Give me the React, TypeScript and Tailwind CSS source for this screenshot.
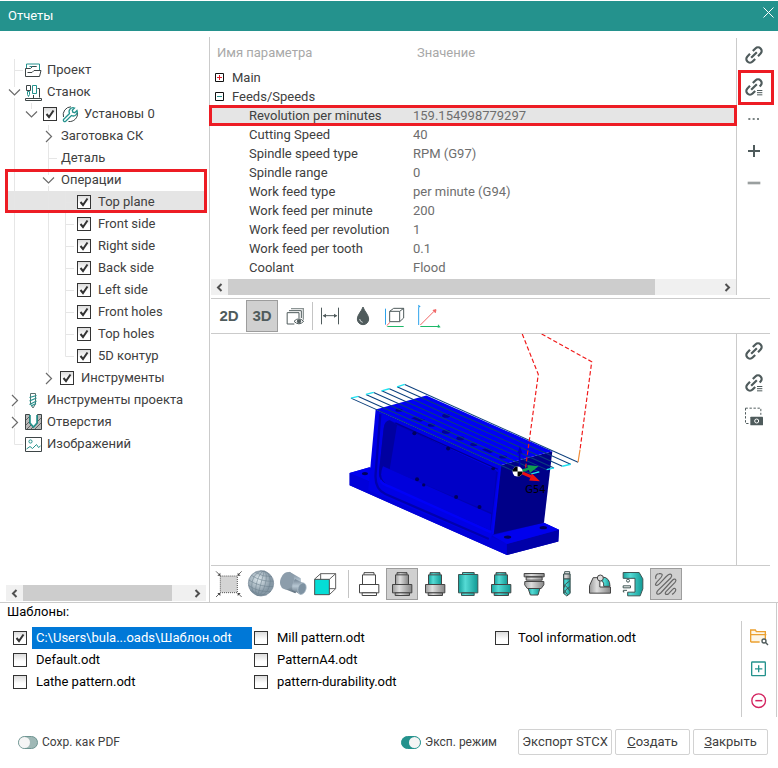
import type { ReactNode } from "react";
import clsx from "clsx";

const INK = "#4f5b5c";
const TEAL = "#24928d";

type IconProps = { children: ReactNode };

// All toolbar glyphs are drawn on a 96 unit grid and shown at 32px.
function Glyph({ children }: IconProps) {
  return (
    <svg className="size-8 shrink-0" viewBox="0 0 96 96" fill="none" stroke={INK} strokeWidth={3}>
      {children}
    </svg>
  );
}

function LinkIcon({ list = false }: { list?: boolean }) {
  return (
    <Glyph>
      <g transform="rotate(-45 48 48)" strokeWidth={6.500}>
        <path d={list ? "M54 37h11a11 11 0 0 1 0 22h-4" : "M54 37h11a11 11 0 0 1 0 22H54"} />
        <path d="M42 37H31a11 11 0 0 0 0 22h11M36 48h24" />
      </g>
      {list && (
        <>
          <path d="M55 54h21v21H55z" fill="white" stroke="none" />
          <path d="M57 58.500h16M57 65h16M57 71.500h16" />
        </>
      )}
    </Glyph>
  );
}

function ToolButton({ label, active, children }: { label: string; active?: boolean; children: ReactNode }) {
  return (
    <button
      type="button"
      aria-label={label}
      aria-pressed={active}
      className={clsx(
        "flex size-8 shrink-0 items-center justify-center border",
        active ? "border-[#9d9d9d] bg-[#d0d0d0]" : "border-transparent",
      )}
    >
      {children}
    </button>
  );
}

function CheckBox({ id, checked = false, label }: { id: string; checked?: boolean; label?: string }) {
  return (
    <span className="grid shrink-0 place-items-center">
      <input
        id={id}
        type="checkbox"
        defaultChecked={checked}
        aria-label={label}
        className="peer col-start-1 row-start-1 size-[14px] appearance-none border border-[#333] bg-linear-to-b from-[#dcdcdc] to-white to-60%"
      />
      <svg className="pointer-events-none invisible col-start-1 row-start-1 size-[14px] peer-checked:visible" viewBox="0 0 14 14" fill="none">
        <path d="M3.500 7l2.500 3 4.500-6.500" stroke="#333" strokeWidth={2} />
      </svg>
    </span>
  );
}

/* ---------- tree ---------- */

const treeIcons: Record<string, ReactNode> = {
  project: (
    <>
      <path d="M1.500 6V2h13v6M4.500 4.500h7" stroke={TEAL} />
      <path d="M.5 14.500v-8h5l2-2h4M.5 14.500h14l1.500-6h-7l-2 2H2.500" stroke="#3d4546" />
    </>
  ),
  machine: (
    <>
      <path d="M1.500 1.500h4v5h-4zM12.500 4.500h2v9M.5 14.500h16v2H.5zM8.500 11v3" stroke="#3d4546" />
      <path d="M7.500 1.500h4v8h-4zM2.500 7.500h2v3l-1 2-1-2z" stroke={TEAL} />
    </>
  ),
  setup: (
    <>
      <path d="M15.500 6.500a8 8 0 0 1-9 9M1.500 11A8 8 0 0 1 9 .8" stroke="#3d4546" />
      <path d="M1.500 13.500l6-6a4 4 0 0 1 5-5.500l-2.200 2.200.5 2 2 .5L15 4.500a4 4 0 0 1-5.500 5l-6 6a1.500 1.500 0 0 1-2-2z" stroke={TEAL} strokeWidth={1.300} />
    </>
  ),
  tools: (
    <>
      <path d="M5.500 4V1.500h5V4M5.500 12l2.500 4 2.500-4M5.500 4v8M10.500 4v8" stroke="#58706f" />
      <path d="M4.500 5.500l7-2M4.500 9l7-3M4.500 12.500l7-3.500M6 14l5-2.500" stroke={TEAL} strokeWidth={1.300} />
    </>
  ),
  holes: (
    <>
      <path d="M.5.500h4V9l4 4 4-4V.5h4v15H.5z" fill="#b9b9b9" stroke="#3d4546" />
      <path d="M1 6l4-4M1 11l4-4M2 15l4-4M6 15l3-3M10 15l6-6M12 8l4-4" stroke="#4a4a4a" strokeWidth={0.800} />
      <path d="M5 1v8l3.500 4L12 9V1" stroke={TEAL} strokeWidth={1.600} fill="white" />
    </>
  ),
  images: (
    <>
      <path d="M.5 1.500h16v14H.5z" stroke="#3d4546" />
      <circle cx="5.500" cy="5.500" r="1.600" stroke={TEAL} />
      <path d="M1.500 13l3.500-2.500 2.500 2 4-4 2 3 2-1.500" stroke={TEAL} />
    </>
  ),
};

type TreeNode = {
  label: string;
  icon?: string;
  check?: boolean;
  open?: boolean;
  selected?: boolean;
  branch?: boolean;
  children?: TreeNode[];
};

const tree: TreeNode[] = [
  { label: "Проект", icon: "project" },
  {
    label: "Станок",
    icon: "machine",
    branch: true,
    open: true,
    children: [
      {
        label: "Установы 0",
        icon: "setup",
        check: true,
        branch: true,
        open: true,
        children: [
          { label: "Заготовка СК", branch: true },
          { label: "Деталь" },
          {
            label: "Операции",
            branch: true,
            open: true,
            children: [
              { label: "Top plane", check: true, selected: true },
              { label: "Front side", check: true },
              { label: "Right side", check: true },
              { label: "Back side", check: true },
              { label: "Left side", check: true },
              { label: "Front holes", check: true },
              { label: "Top holes", check: true },
              { label: "5D контур", check: true },
            ],
          },
          { label: "Инструменты", check: true, branch: true },
        ],
      },
    ],
  },
  { label: "Инструменты проекта", icon: "tools", branch: true },
  { label: "Отверстия", icon: "holes", branch: true },
  { label: "Изображений", icon: "images" },
];

function TreeRow({ node, guides, last }: { node: TreeNode; guides: boolean[]; last: boolean }) {
  const id = `tree-${node.label}`;
  const text = <span className="whitespace-nowrap">{node.label}</span>;
  const plain = !node.check && !node.icon;
  return (
    <div className={clsx("mr-[5px] ml-[6px] flex h-[22px] items-center", node.selected && "bg-[#e5e5e5]")}>
      {guides.map((line, i) => (
        <svg key={i} className="h-[22px] w-[17px] shrink-0" stroke="#e6e6e6">
          {line && <path d="M8.500 0v22" />}
        </svg>
      ))}
      <svg className="h-[22px] w-[17px] shrink-0" fill="none" stroke="#e6e6e6">
        {node.branch ? (
          <>
            <path d={last ? "M8.500 0v6" : "M8.500 0v6M8.500 17v5"} />
            <path d={node.open ? "M3 8.500l5.500 5.500L14 8.500" : "M6 6l5.500 5.500L6 17"} stroke="#6b6b6b" strokeWidth={1.200} />
          </>
        ) : (
          <path d={last ? "M8.500 0v11.500H17" : "M8.500 0v22M8.500 11.500H17"} />
        )}
      </svg>
      <div
        className={clsx(
          "flex items-center",
          node.icon ? "gap-[5px]" : "gap-[7px]",
          guides.length === 0 && "ml-[2px]",
          guides.length > 0 && (plain ? "ml-1" : "ml-[3px]"),
        )}
      >
        {node.check && <CheckBox id={id} checked />}
        {node.icon && (
          <svg className="size-[17px] shrink-0" viewBox="0 0 17 17" fill="none">
            {treeIcons[node.icon]}
          </svg>
        )}
        {node.check ? <label htmlFor={id}>{text}</label> : text}
      </div>
    </div>
  );
}

function TreeLevel({ nodes, guides = [] }: { nodes: TreeNode[]; guides?: boolean[] }) {
  return (
    <ul>
      {nodes.map((node, i) => {
        const last = i === nodes.length - 1;
        return (
          <li key={node.label} className="relative">
            <TreeRow node={node} guides={guides} last={last} />
            {node.children && <TreeLevel nodes={node.children} guides={[...guides, !last]} />}
            {node.label === "Операции" && (
              <span className="pointer-events-none absolute top-0 right-[2px] left-[5px] h-11 border-3 border-[#ed1c24]" />
            )}
          </li>
        );
      })}
    </ul>
  );
}

function ScrollBar({ thumb }: { thumb: string }) {
  return (
    <div className="flex h-4 bg-[#f0f0f0]">
      <button type="button" aria-label="Влево" className="flex w-[17px] items-center justify-center">
        <svg className="size-[9px]" viewBox="0 0 9 9" fill="none" stroke="#505050" strokeWidth={2}>
          <path d="M6.500 1L3 4.500 6.500 8" />
        </svg>
      </button>
      <div className="flex-1">
        <div className={clsx("h-full bg-[#cdcdcd]", thumb)} />
      </div>
      <button type="button" aria-label="Вправо" className="flex w-[17px] items-center justify-center">
        <svg className="size-[9px]" viewBox="0 0 9 9" fill="none" stroke="#505050" strokeWidth={2}>
          <path d="M2.500 1L6 4.500 2.500 8" />
        </svg>
      </button>
    </div>
  );
}

/* ---------- parameters ---------- */

const groups = [
  { name: "Main", open: false, rows: [] },
  {
    name: "Feeds/Speeds",
    open: true,
    rows: [
      ["Revolution per minutes", "159.154998779297"],
      ["Cutting Speed", "40"],
      ["Spindle speed type", "RPM (G97)"],
      ["Spindle range", "0"],
      ["Work feed type", "per minute (G94)"],
      ["Work feed per minute", "200"],
      ["Work feed per revolution", "1"],
      ["Work feed per tooth", "0.1"],
      ["Coolant", "Flood"],
    ],
  },
];

function ParameterTable() {
  return (
    <table className="w-full table-fixed border-collapse text-left">
      <thead>
        <tr className="h-[30px] text-[#a8a8a8]">
          <th className="w-[203px] pl-[7px] font-normal">Имя параметра</th>
          <th className="pl-1 font-normal">Значение</th>
        </tr>
      </thead>
      {groups.map((group) => (
        <tbody key={group.name}>
          <tr className="h-[19px] leading-[19px]">
            <td colSpan={2} className="p-0">
              <div className="flex items-center gap-2 pl-[5px]">
                <button type="button" aria-label={group.name} aria-expanded={group.open} className="flex size-[9px] items-center">
                  <svg className="size-[9px]" viewBox="0 0 9 9" fill="none">
                    <path d="M.5.5h8v8h-8z" stroke="#111" />
                    <path d={group.open ? "M2 4.500h5" : "M2 4.500h5M4.500 2v5"} stroke={group.open ? TEAL : "#e0202a"} />
                  </svg>
                </button>
                {group.name}
              </div>
            </td>
          </tr>
          {group.rows.map(([name, value], i) => (
            <tr
              key={name}
              className={clsx("h-[19px] leading-[19px]", i === 0 && "bg-[#e5e5e5] outline-3 -outline-offset-2 outline-[#ed1c24]")}
            >
              <td className="p-0 pl-[39px]">{name}</td>
              <td className="p-0 text-[#6e6e6e]">{value}</td>
            </tr>
          ))}
        </tbody>
      ))}
    </table>
  );
}

/* ---------- 3D view ---------- */

const passes = [
  "M193 163L712 396",
  "M170 170L690 402",
  "M147 176L665 408",
  "M124 182L640 413",
  "M100 187L618 418",
  "M77 193L596 425",
  "M54 199L572 431",
  "M32 204L530 427",
];

function ModelView() {
  return (
    <svg className="block h-full w-full" viewBox="211 334 524 231" role="img" aria-label="Top plane">
      <g transform="translate(340 330) scale(.33333)" fill="none">
        {/* base plate */}
        <path d="M28 428L88 411 610 577 655 598 653 633 499 674 28 465Z" fill="#0000cf" />
        <path d="M28 428L28 465 499 674 499 640Z" fill="#0000da" />
        <path d="M499 640L655 598 653 633 499 674Z" fill="#0000a8" />
        <path d="M455 615L610 577 655 598 499 641Z" fill="#0000ee" />
        <path d="M28 428L88 411 92 455Z" fill="#0000f0" />
        {/* body */}
        <path d="M106 238L480 405 457 612 445 630 110 492 84 478Z" fill="#0000e6" />
        <path d="M480 405L635 363 610 577 457 612Z" fill="#000088" />
        <path d="M106 238L258 196 635 363 480 405Z" fill="#0000f6" />
        {/* pocket */}
        <path d="M120 252L106 430C103 465 115 482 135 491L445 626" stroke="#0000ae" strokeWidth={7} />
        <path d="M148 270Q132 272 130 295L116 425Q114 450 138 460L450 600 472 425 165 278Z" fill="#0000b4" />
        <path d="M148 270Q132 272 130 295L116 425Q114 450 138 460L152 425 170 285Z" fill="#0000a0" />
        <path d="M170 285L467 420 455 548 148 418Z" fill="#0000c6" />
        <path d="M128 408L452 552 449 600 150 468Q110 450 128 408Z" fill="#0000dc" />
        <path d="M120 450Q125 462 150 470L452 606" stroke="#0000f8" strokeWidth={7} />
        <path d="M165 278L472 417" stroke="#000090" strokeWidth={4} />
        <path d="M480 405L457 612" stroke="#0000f5" strokeWidth={5} />
        {/* drilled holes */}
        <g fill="#00005e">
          <ellipse cx="222" cy="309" rx="6" ry="6" />
          <ellipse cx="323" cy="355" rx="6" ry="6" />
          <ellipse cx="458" cy="415" rx="6" ry="5" />
          <ellipse cx="230" cy="447" rx="6" ry="6" />
          <ellipse cx="250" cy="464" rx="5" ry="5" />
          <ellipse cx="347" cy="500" rx="6" ry="6" />
          <ellipse cx="417" cy="530" rx="6" ry="6" />
          <ellipse cx="74" cy="430" rx="9" ry="5" />
          <ellipse cx="501" cy="620" rx="11" ry="5" />
          <ellipse cx="608" cy="592" rx="11" ry="5" />
        </g>
        <g fill="#000098">
          <ellipse cx="176" cy="240" rx="11" ry="5" />
          <ellipse cx="317" cy="257" rx="12" ry="6" />
          <ellipse cx="273" cy="285" rx="11" ry="5" />
          <ellipse cx="317" cy="305" rx="13" ry="6" />
          <ellipse cx="360" cy="324" rx="12" ry="6" />
          <ellipse cx="400" cy="343" rx="11" ry="5" />
          <ellipse cx="488" cy="380" rx="12" ry="5" />
          <path d="M212 264l14-5 28 10-13 6zM424 358l14-5 24 10-13 6z" />
        </g>
        {/* tool passes */}
        <g stroke="#0b3f7c" strokeWidth={3}>
          {passes.map((d) => (
            <path key={d} d={d} />
          ))}
        </g>
        <path
          d="M170 170l23-7M124 182l23-6M77 193l23-6M32 204l22-5M690 402l-25 6M640 413l-22 5M596 425l-24 6"
          stroke="#1fe4f2"
          strokeWidth={4}
        />
        {/* rapid moves */}
        <path d="M545 12L593 133 555 412M603 12L753 95 718 358" stroke="#f01818" strokeWidth={3.500} strokeDasharray="13 7" />
        <path d="M718 358l-6 38" stroke="#ef8a35" strokeWidth={3.500} />
        {/* origin */}
        <path d="M537 412V366" stroke="#0000b8" strokeWidth={5} />
        <path d="M530 370l8-22 8 22z" fill="#0000b8" />
        <path d="M543 422l25-8" stroke="#109c50" strokeWidth={8} />
        <path d="M560 404l34 4-26 20z" fill="#109c50" />
        <path d="M545 428l26 11" stroke="#f01010" strokeWidth={9} />
        <path d="M574 430l24 23-32-2z" fill="#f01010" />
        <circle cx="531" cy="424" r="15" fill="white" />
        <path d="M531 424v-15a15 15 0 0 0-15 15zM531 424v15a15 15 0 0 0 15-15z" fill="black" />
        <text x="554" y="487" fontSize="30" fill="black" fontFamily="DejaVu Sans, sans-serif">
          G54
        </text>
      </g>
    </svg>
  );
}

/* ---------- toolbars ---------- */

function ViewToolbar() {
  return (
    <div className="flex h-9 items-center gap-px border-y border-[#cbcbcb] pl-[2px]">
      <ToolButton label="2D">
        <span className="font-['Liberation_Sans',sans-serif] text-[15px] font-bold text-[#4f5b5c]">2D</span>
      </ToolButton>
      <ToolButton label="3D" active>
        <span className="font-['Liberation_Sans',sans-serif] text-[15px] font-bold text-[#4f5b5c]">3D</span>
      </ToolButton>
      <ToolButton label="Слои">
        <Glyph>
          <path d="M36 26h37v33" stroke="#8d9595" strokeWidth={4} />
          <path d="M30 32h37v22" />
          <path d="M46 72H24.500V38H60v16" />
          <path d="M45 64q14-15 29 0q-14 15-29 0z" fill="white" />
          <circle cx="60" cy="64" r="5" fill={INK} />
        </Glyph>
      </ToolButton>
      <span className="h-7 w-px bg-[#c4c4c4]" />
      <ToolButton label="Размер">
        <Glyph>
          <path d="M22.500 23v50M73.500 23v50M28 47h40" />
          <path d="M26 47l10-6v12zM70 47l-10-6v12z" fill={INK} stroke="none" />
        </Glyph>
      </ToolButton>
      <ToolButton label="Заливка">
        <Glyph>
          <path d="M48 21C44 34 31 44 31 57a17 17 0 0 0 34 0C65 44 52 34 48 21z" fill={INK} />
          <path d="M38 57a11 11 0 0 0 9 10" stroke="#d5dada" />
        </Glyph>
      </ToolButton>
      <ToolButton label="Габариты">
        <Glyph>
          <path d="M29 34h30v31H29zM29 34l12-9h30v29l-12 11M59 34l12-9" />
          <path d="M16.500 26v48" stroke="#2ea3ec" />
          <path d="M22 79.500h49" stroke="#1db868" />
          <path d="M20 77l10-10" stroke="#f16666" />
        </Glyph>
      </ToolButton>
      <ToolButton label="Оси">
        <Glyph>
          <path d="M17 22v53" stroke="#2ea3ec" />
          <path d="M15 14l8 5-6 5z" fill="#2ea3ec" stroke="none" />
          <path d="M22 79.500h54" stroke="#1db868" />
          <path d="M75 73l8 9-9 1z" fill="#1db868" stroke="none" />
          <path d="M22 75l41-41" stroke="#f16666" />
          <path d="M69 29l-2 9-7-7z" fill="#f16666" stroke="#f16666" />
        </Glyph>
      </ToolButton>
    </div>
  );
}

function HolderTones() {
  return (
    <svg className="absolute size-0" aria-hidden="true">
      <defs>
        <linearGradient id="steel">
          <stop offset="0" stopColor="#9a9a9a" />
          <stop offset=".35" stopColor="#dedede" />
          <stop offset="1" stopColor="#858585" />
        </linearGradient>
        <linearGradient id="teal">
          <stop offset="0" stopColor="#17a29c" />
          <stop offset=".35" stopColor="#55dbd5" />
          <stop offset="1" stopColor="#109994" />
        </linearGradient>
        <linearGradient id="cylinder" x1="0" x2="0" y1="0" y2="1">
          <stop offset="0" stopColor="#718292" />
          <stop offset=".45" stopColor="#b8c8d4" />
          <stop offset="1" stopColor="#5b6c7a" />
        </linearGradient>
        <radialGradient id="ball" cx=".4" cy=".35">
          <stop offset="0" stopColor="#dfe9ee" />
          <stop offset="1" stopColor="#8799a6" />
        </radialGradient>
      </defs>
    </svg>
  );
}

function Holder({ top, flange }: { top: string; flange: string }) {
  return (
    <Glyph>
      <g stroke="#454545">
        <path d="M33 20v-6h30v6" fill={top} />
        <path d="M28.500 49.500v-29h39v29z" fill={top} />
        <path d="M19.500 49.500h58v25h-58z" fill={flange} />
        <path d="M27.500 74.500h43v8h-43z" fill={flange} />
      </g>
    </Glyph>
  );
}

function DisplayToolbar() {
  return (
    <div className="flex h-[37px] items-center gap-px border-t border-[#cbcbcb] pl-[2px]">
      <HolderTones />
      <ToolButton label="Вписать">
        <Glyph>
          <path d="M22 24h51v50H22z" fill="#d4d4d4" stroke="#555" strokeDasharray="3 3" />
          <path d="M9 10l13 13M86 10L74 22M9 87l13-13M86 87L74 75" stroke="#666" />
          <path d="M22 14v9h-9zM74 14v9h9zM22 84v-9h-9zM74 84v-9h9z" fill="#444" stroke="none" />
        </Glyph>
      </ToolButton>
      <ToolButton label="Каркас">
        <Glyph>
          <circle cx="45" cy="46" r="38" fill="url(#ball)" stroke="#758796" strokeWidth={2} />
          <g stroke="#6c808e" strokeWidth={1.500} transform="rotate(15 45 46)">
            <ellipse cx="45" cy="46" rx="13" ry="38" />
            <ellipse cx="45" cy="46" rx="27" ry="38" />
            <path d="M45 8v76M7 46q38 12 76 0M10 30q35 12 70 0M19 18q26 9 52 0M10 62q35 12 70 0M19 75q26 8 52 0" />
          </g>
        </Glyph>
      </ToolButton>
      <ToolButton label="Тело">
        <Glyph>
          <g stroke="none">
            <path d="M31 11L65 31Q71 50 49 76L19 64Z" fill="url(#cylinder)" />
            <ellipse cx="24" cy="38" rx="20" ry="27" transform="rotate(20 24 38)" fill="#8c9dab" />
            <path d="M48 33l26 13-9 34-25-15q-2-18 8-32z" fill="url(#cylinder)" />
            <ellipse cx="69" cy="62" rx="12" ry="18" transform="rotate(18 69 62)" fill="#7e92a2" stroke="#b3c2cd" strokeWidth={2} />
          </g>
        </Glyph>
      </ToolButton>
      <ToolButton label="Заготовка">
        <Glyph>
          <g stroke="#4c4c4c">
            <path d="M26 17h45v45L52 80M26 17v45h45M7 34l19-17M52 34l19-17M8 79l18-17" stroke="#606060" />
            <path d="M8 34h44v46H8z" fill="#05ddd6" />
          </g>
        </Glyph>
      </ToolButton>
      <span className="mx-[3px] h-7 w-px bg-[#c4c4c4]" />
      <ToolButton label="Контур державки">
        <Holder top="white" flange="white" />
      </ToolButton>
      <ToolButton label="Державка" active>
        <Holder top="url(#steel)" flange="url(#steel)" />
      </ToolButton>
      <ToolButton label="Державка и инструмент">
        <Holder top="url(#teal)" flange="url(#steel)" />
      </ToolButton>
      <ToolButton label="Патрон">
        <Glyph>
          <g stroke="#3f5554" fill="url(#teal)">
            <path d="M31.500 13.500h35v6h-35zM19.500 19.500h58v55h-58zM28.500 74.500h38v8h-38z" />
          </g>
        </Glyph>
      </ToolButton>
      <ToolButton label="Инструмент">
        <Holder top="url(#teal)" flange="url(#teal)" />
      </ToolButton>
      <ToolButton label="Оправка">
        <Glyph>
          <g stroke="#454545" fill="url(#steel)">
            <path d="M30 60h36l-6 21H37z" fill="url(#teal)" />
            <path d="M18.500 16.500h60v10h-60zM24.500 26.500h48v10h-48zM20.500 40.500h57v10l-8 11H28l-8-11z" />
          </g>
        </Glyph>
      </ToolButton>
      <ToolButton label="Сверло">
        <Glyph>
          <g stroke="#3f5554">
            <path d="M41 11h15v7H41z" fill="#eee" />
            <path d="M37.500 18h20v15h-20z" fill="url(#steel)" />
            <path d="M37.500 33h20v43l-10 8-10-8z" fill="url(#teal)" />
            <path d="M57 38q-18 10-19 23M57 56q-15 8-17 20M39 50q12 8 18 20M38 66l12 14" />
          </g>
        </Glyph>
      </ToolButton>
      <ToolButton label="Приспособление">
        <Glyph>
          <g stroke="#454545">
            <path d="M16.500 75.500V53l11-24h20v28h32v18.500z" fill="url(#steel)" />
            <path d="M56 27q22 2 22 28H59V45l-8-8z" fill="url(#teal)" />
            <circle cx="49" cy="30" r="9" fill="#ddd" />
          </g>
        </Glyph>
      </ToolButton>
      <ToolButton label="Станок">
        <Glyph>
          <g stroke="#3f5554">
            <path d="M18.500 13.500h48l11 19v30l-8 21H32v-11h22V31H18.500z" fill="url(#teal)" />
            <path d="M18.500 53.500h22v6h-22zM22 72h-3v-5h11" fill="white" />
            <circle cx="33" cy="38" r="4.500" fill="white" />
          </g>
        </Glyph>
      </ToolButton>
      <ToolButton label="Траектория" active>
        <Glyph>
          <path
            d="M18 33C14 25 20 17 27 17C43 15 36 26 28 34C14 47 14 53 21 52C28 51 45 27 55 20C63 15 69 22 62 30L24 67C16 76 22 83 32 75L68 36C76 29 81 36 75 43L48 71C42 78 49 82 56 77L68 64C74 57 80 63 76 70C73 75 69 78 66 79"
            stroke="#666"
            strokeWidth={3.500}
          />
        </Glyph>
      </ToolButton>
    </div>
  );
}

/* ---------- templates ---------- */

const templates = [
  "C:\\Users\\bula...oads\\Шаблон.odt",
  "Default.odt",
  "Lathe pattern.odt",
  "Mill pattern.odt",
  "PatternA4.odt",
  "pattern-durability.odt",
  "Tool information.odt",
];

function Templates() {
  return (
    <section className="flex border-t border-[#cbcbcb] text-black">
      <div className="flex-1">
        <h2 className="pl-[7px] leading-[18px]">Шаблоны:</h2>
        <ul className="mt-[6px] grid auto-cols-[241px] grid-flow-col grid-rows-3 pl-[13px]">
          {templates.map((name, i) => (
            <li key={name} className="flex h-[22px] items-center gap-[5px]">
              <CheckBox id={`template-${i}`} checked={i === 0} />
              <label
                htmlFor={`template-${i}`}
                className={clsx("flex-1 pl-1 leading-[22px] whitespace-nowrap", i === 0 && "mr-[2px] bg-[#0078d7] text-white")}
              >
                {name}
              </label>
            </li>
          ))}
        </ul>
      </div>
      <div className="mr-px flex border-r border-[#cbcbcb] pt-[18px]">
        <div className="flex flex-col border-l border-[#cbcbcb] px-px">
          <ToolButton label="Открыть шаблон">
            <Glyph>
              <path d="M23 63V27h14l3 5h27v27M23 41h47M50 63H23" stroke="#eba02f" strokeWidth={4} fill="#fdf6e7" />
              <circle cx="63" cy="60" r="6" fill="white" strokeWidth={4} />
              <path d="M67 64l8 8" strokeWidth={4} />
            </Glyph>
          </ToolButton>
          <ToolButton label="Добавить шаблон">
            <Glyph>
              <rect x="26" y="27" width="41" height="41" rx="2" stroke={TEAL} strokeWidth={4} />
              <path d="M47 37v21M36 47.500h22" stroke={TEAL} strokeWidth={4} />
            </Glyph>
          </ToolButton>
          <ToolButton label="Удалить шаблон">
            <Glyph>
              <circle cx="47" cy="47" r="20.500" stroke="#d3235f" strokeWidth={4} />
              <path d="M37 47h21" stroke="#d3235f" strokeWidth={4.500} />
            </Glyph>
          </ToolButton>
        </div>
      </div>
    </section>
  );
}

function Switch({ id, label, on = false }: { id: string; label: string; on?: boolean }) {
  return (
    <div className="flex items-center gap-1 text-xs">
      <input
        id={id}
        type="checkbox"
        role="switch"
        defaultChecked={on}
        className="flex h-[13px] w-5 appearance-none items-center rounded-full border border-[#6f9592] bg-[#9fb8b6] before:size-[11px] before:rounded-full before:bg-[#f5f5f5] checked:justify-end checked:border-[#24928d] checked:bg-[#24928d]"
      />
      <label htmlFor={id}>{label}</label>
    </div>
  );
}

function FooterButton({ children, wide }: { children: ReactNode; wide?: boolean }) {
  return (
    <button
      type="button"
      className={clsx("h-[26px] rounded-[2px] border border-[#d2d2d2] bg-white whitespace-nowrap", wide ? "w-[94px]" : "w-[75px]")}
    >
      {children}
    </button>
  );
}

export default function App() {
  return (
    <div className="flex min-h-screen flex-col bg-white pt-px font-['Roboto','Noto_Sans',sans-serif] text-[13px] leading-4 text-[#404040]">
      <header className="flex h-[30px] items-center justify-between bg-[#24928d] pl-2 text-white">
        <h1>Отчеты</h1>
        <button type="button" aria-label="Закрыть окно" className="mr-1 mb-2">
          <svg className="size-[11px]" viewBox="0 0 11 11" stroke="white">
            <path d="M.5.5l10 10M10.500.5l-10 10" />
          </svg>
        </button>
      </header>

      <main className="flex flex-1">
        <nav className="mt-[6px] flex w-[210px] shrink-0 flex-col border-r border-[#cbcbcb] pt-[22px]">
          <TreeLevel nodes={tree} />
          <div className="mt-auto mr-[3px] mb-px ml-[6px]">
            <ScrollBar thumb="w-[90%]" />
          </div>
        </nav>

        <div className="flex min-w-0 flex-1 flex-col">
          <div className="flex pt-[7px]">
            <div className="flex min-w-0 flex-1 flex-col border-r border-[#cbcbcb]">
              <ParameterTable />
              <div className="mt-[2px] ml-px">
                <ScrollBar thumb="w-[87%]" />
              </div>
            </div>
            <div className="flex w-[41px] flex-col pt-px pl-px">
              <ToolButton label="Связать">
                <LinkIcon />
              </ToolButton>
              <div className="relative">
                <ToolButton label="Связать список">
                  <LinkIcon list />
                </ToolButton>
                <span className="pointer-events-none absolute -top-px left-0 h-[35px] w-9 border-3 border-[#ed1c24]" />
              </div>
              <ToolButton label="Ещё">
                <Glyph>
                  <path d="M31 48h6M44 48h6M57 48h6" stroke="#7b8484" strokeWidth={6} />
                </Glyph>
              </ToolButton>
              <ToolButton label="Добавить">
                <Glyph>
                  <path d="M48 30v36M30 48h36" strokeWidth={6} />
                </Glyph>
              </ToolButton>
              <ToolButton label="Удалить">
                <Glyph>
                  <path d="M29 48h38" stroke="#9a9f9f" strokeWidth={8} />
                </Glyph>
              </ToolButton>
            </div>
          </div>

          <div className="mt-[3px] mr-2 ml-px flex flex-1 flex-col">
            <ViewToolbar />
            <div className="flex flex-1">
              <div className="min-w-0 flex-1 border-r border-[#cbcbcb]">
                <ModelView />
              </div>
              <div className="flex w-[33px] flex-col pt-px pl-px">
                <ToolButton label="Связать вид">
                  <LinkIcon />
                </ToolButton>
                <ToolButton label="Связать вид списком">
                  <LinkIcon list />
                </ToolButton>
                <ToolButton label="Снимок области">
                  <Glyph>
                    <path d="M22.500 27.500h46v20M22.500 27.500v46h10" strokeDasharray="7 5" />
                    <rect x="37" y="53" width="38" height="26" rx="2" fill={INK} stroke="none" />
                    <circle cx="56" cy="66" r="6" stroke="white" />
                  </Glyph>
                </ToolButton>
              </div>
            </div>
            <DisplayToolbar />
          </div>
        </div>
      </main>

      <Templates />

      <footer className="flex items-center justify-between pt-3 pr-[10px] pb-[13px] pl-[18px]">
        <Switch id="save-pdf" label="Сохр. как PDF" />
        <div className="flex items-center gap-[3px]">
          <div className="mr-[18px]">
            <Switch id="expert-mode" label="Эксп. режим" on />
          </div>
          <FooterButton wide>Экспорт STCX</FooterButton>
          <FooterButton>
            <u>С</u>оздать
          </FooterButton>
          <FooterButton>
            <u>З</u>акрыть
          </FooterButton>
        </div>
      </footer>
    </div>
  );
}
